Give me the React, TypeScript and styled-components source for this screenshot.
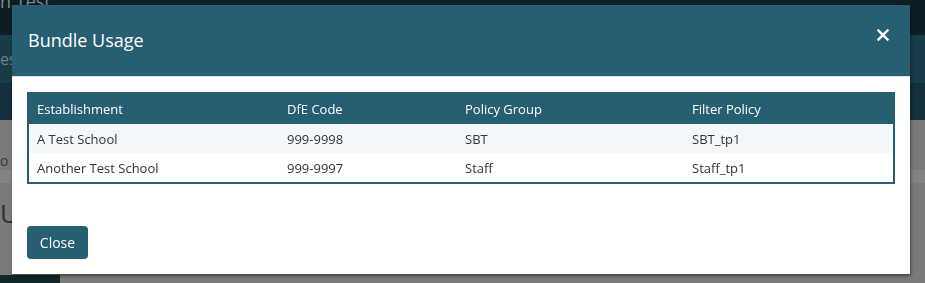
import React from "react";
import styled, { createGlobalStyle } from "styled-components";

const Global = createGlobalStyle`
  html, body { margin: 0; padding: 0; }
  body {
    font-family: "Open Sans", "Liberation Sans", sans-serif;
    background: #7a7a7a;
    width: 925px;
    height: 283px;
    overflow: hidden;
  }
`;

const Page = styled.div`
  display: flex;
  flex-direction: column;
  height: 283px;
  color: #aeb6b9;
`;

const Band = styled.div<{ $h: number; $bg: string; $fs?: number; $color?: string; $align?: string }>`
  height: ${(p) => p.$h}px;
  background: ${(p) => p.$bg};
  color: ${(p) => p.$color || "#8a9599"};
  font-size: ${(p) => p.$fs || 14}px;
  display: flex;
  align-items: ${(p) => p.$align || "center"};
  overflow: hidden;
  white-space: nowrap;
  flex-shrink: 0;
`;

const BrandText = styled.span`
  margin-top: -9px;
  line-height: 20px;
`;

const Spacer = styled.div`
  flex: 1;
  background: #7a7a7a;
`;

const BottomBar = styled.div`
  height: 8px;
  display: flex;
`;

const BottomDark = styled.div`
  width: 60px;
  background: #12252d;
`;

const Overlay = styled.div`
  position: fixed;
  inset: 0;
`;

const Modal = styled.div`
  position: absolute;
  left: 12px;
  top: 5px;
  width: 898px;
  background: #fff;
  box-shadow: 1px 2px 3px rgba(0, 0, 0, 0.45);
  display: flex;
  flex-direction: column;
`;

const Header = styled.div`
  height: 72px;
  background: #265e72;
  border-bottom: 1px solid #dce2e5;
  display: flex;
  align-items: center;
  justify-content: space-between;
  padding: 0 16px 0 16px;
  box-sizing: border-box;
  color: #fff;
`;

const Title = styled.h4`
  margin: 0;
  font-size: 18px;
  font-weight: 400;
  margin-top: -1px;
`;

const CloseX = styled.button`
  border: 0;
  background: transparent;
  color: #fff;
  padding: 0;
  width: 18px;
  height: 18px;
  display: flex;
  align-items: center;
  justify-content: center;
  margin-top: -11px;
  margin-right: 2px;
  cursor: pointer;
`;

const Body = styled.div`
  padding: 15px 15px 0 15px;
`;

const Table = styled.table`
  width: 100%;
  border-collapse: collapse;
  border: 2px solid #265e72;
  font-size: 13px;
  table-layout: fixed;
`;

const Th = styled.th`
  background: #265e72;
  color: #fff;
  font-weight: 400;
  text-align: left;
  height: 29px;
  padding: 0 8px;
  border-bottom: 1px solid #265e72;
`;

const Tr = styled.tr<{ $striped?: boolean }>`
  background: ${(p) => (p.$striped ? "#f5f8fb" : "#fff")};
  & + & td {
    border-top: 1px solid #dfe5ea;
  }
`;

const Td = styled.td`
  color: #333;
  height: 29px;
  padding: 0 8px;
`;

const Footer = styled.div`
  padding: 42px 15px 15px 15px;
`;

const Button = styled.button`
  font-family: "Open Sans", "Liberation Sans", sans-serif;
  font-size: 14px;
  color: #fff;
  background: #265e72;
  border: 0;
  border-radius: 4px;
  width: 61px;
  height: 33px;
  padding: 0;
  cursor: pointer;
`;

const rows = [
  { est: "A Test School", code: "999-9998", group: "SBT", policy: "SBT_tp1" },
  { est: "Another Test School", code: "999-9997", group: "Staff", policy: "Staff_tp1" },
];

export default function App() {
  return (
    <>
      <Global />
      <Page>
        <Band $h={35} $bg="#0e1d24" $color="#7f898d" $fs={18} $align="flex-start">
          <BrandText>n Test</BrandText>
        </Band>
        <Band $h={48} $bg="#183d49" $color="#6f8288" $fs={16}>
          es
        </Band>
        <Band $h={37} $bg="#132f39" />
        <Band $h={50} $bg="#7a7a7a" $color="#3b3b3b" $fs={14} $align="flex-end">
          o F
        </Band>
        <Band $h={13} $bg="#838383" />
        <Band $h={60} $bg="#7a7a7a" $color="#2f2f2f" $fs={26}>
          U
        </Band>
        <Spacer />
        <BottomBar>
          <BottomDark />
        </BottomBar>
      </Page>
      <Overlay>
        <Modal>
          <Header>
            <Title>Bundle Usage</Title>
            <CloseX aria-label="Close">
              <svg width="12" height="12" viewBox="0 0 12 12">
                <path d="M1.5 1.5 L10.5 10.5 M10.5 1.5 L1.5 10.5" stroke="#fff" strokeWidth="2.4" strokeLinecap="square" />
              </svg>
            </CloseX>
          </Header>
          <Body>
            <Table>
              <colgroup>
                <col style={{ width: 251 }} />
                <col style={{ width: 178 }} />
                <col style={{ width: 227 }} />
                <col />
              </colgroup>
              <thead>
                <tr>
                  <Th>Establishment</Th>
                  <Th>DfE Code</Th>
                  <Th>Policy Group</Th>
                  <Th>Filter Policy</Th>
                </tr>
              </thead>
              <tbody>
                {rows.map((r, i) => (
                  <Tr key={r.code} $striped={i % 2 === 0}>
                    <Td>{r.est}</Td>
                    <Td>{r.code}</Td>
                    <Td>{r.group}</Td>
                    <Td>{r.policy}</Td>
                  </Tr>
                ))}
              </tbody>
            </Table>
          </Body>
          <Footer>
            <Button>Close</Button>
          </Footer>
        </Modal>
      </Overlay>
    </>
  );
}
